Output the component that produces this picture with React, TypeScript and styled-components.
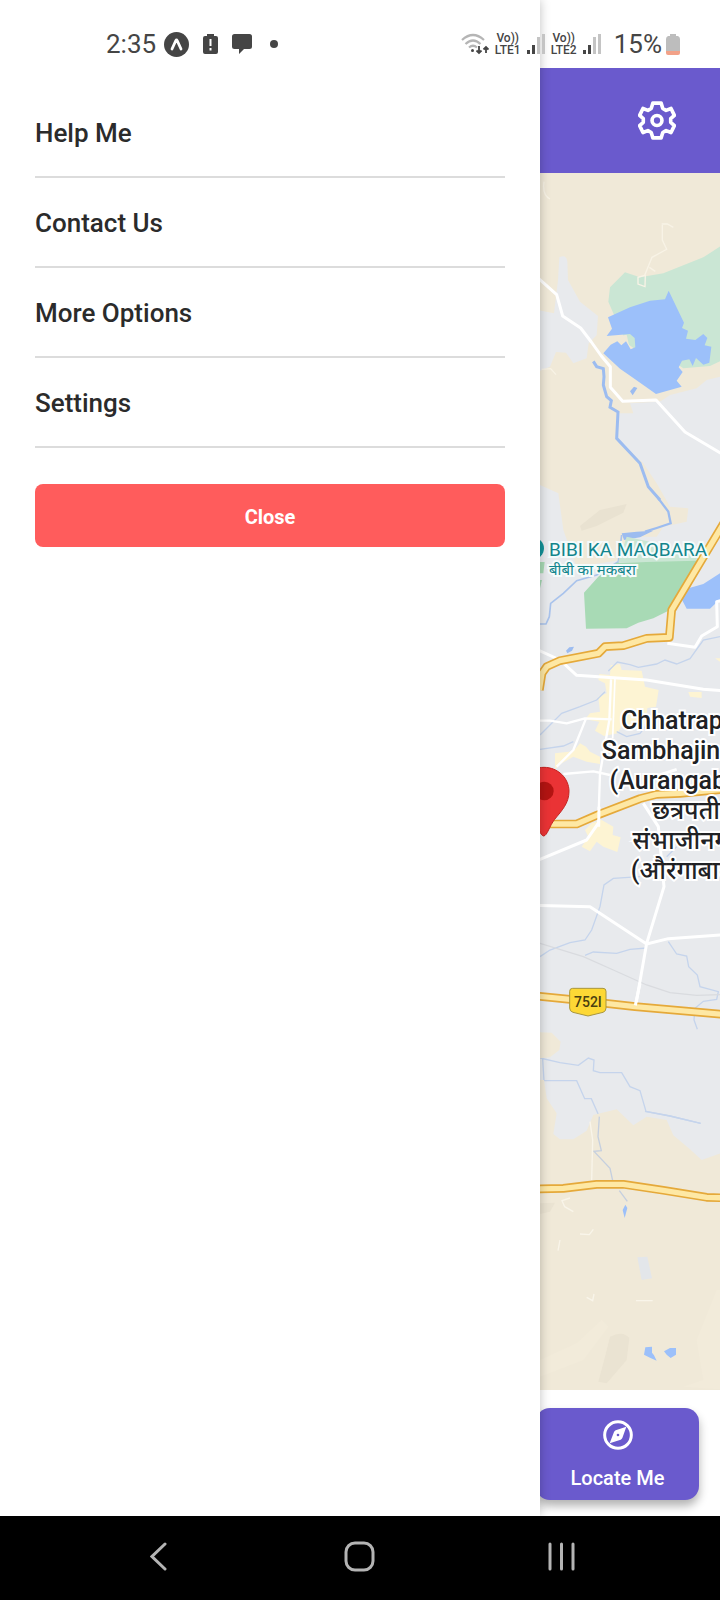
import React from 'react';
import styled, { createGlobalStyle } from 'styled-components';

const GlobalStyle = createGlobalStyle`
  *, *::before, *::after { box-sizing: border-box; }
  body { margin: 0; background: #fff; font-family: Roboto, 'Noto Sans', sans-serif; }
  button { font: inherit; border: 0; padding: 0; background: none; cursor: pointer; }
  svg { display: block; }
`;

const Screen = styled.div`
  display: flex;
  flex-direction: column;
  min-height: 100vh;
  overflow: hidden;
`;

const Stage = styled.div`
  flex: 1;
  display: grid;
  grid-template-columns: 3fr 1fr;
  grid-template-rows: 68px 1fr;
`;

const StatusBar = styled.header`
  grid-area: 1 / 1 / 2 / 3;
  z-index: 3;
  display: flex;
  align-items: center;
  justify-content: space-between;
  padding: 20px 40px 0 106px;
  color: #454545;
`;

const StatusGroup = styled.div<{ $gap: number }>`
  display: flex;
  align-items: center;
  gap: ${(p) => p.$gap}px;
`;

const Clock = styled.time`
  margin-right: -6px;
  font-size: 26px;
  line-height: 30px;
`;

const BatteryLevel = styled.div`
  display: flex;
  align-items: center;
  gap: 4px;
  margin-left: 7px;
  font-size: 26px;
  line-height: 30px;
`;

const Network = styled.span`
  display: flex;
  flex-direction: column;
  align-items: center;
  width: 26px;
  font-size: 12px;
  font-weight: 500;
  line-height: 12px;
  white-space: nowrap;
`;

const Drawer = styled.nav`
  grid-area: 1 / 1 / 3 / 2;
  z-index: 2;
  display: flex;
  flex-direction: column;
  padding: 88px 35px 36px;
  background: #fff;
  box-shadow: 0 0 10px rgba(0, 0, 0, 0.25);
`;

const MenuItem = styled.button`
  height: 90px;
  padding-top: 2px;
  border-bottom: 2px solid #dcdcdc;
  color: #2b2b2b;
  font-size: 26px;
  font-weight: 500;
  text-align: left;
`;

const CloseButton = styled.button`
  height: 63px;
  margin-top: 36px;
  padding-top: 2px;
  border-radius: 8px;
  background: #ff5c5c;
  color: #fff;
  font-size: 20px;
  font-weight: 700;
`;

const AppPane = styled.main`
  grid-area: 2 / 2 / 3 / 3;
  z-index: 1;
  display: flex;
  flex-direction: column;
  min-width: 0;
`;

const AppBar = styled.div`
  display: flex;
  align-items: center;
  justify-content: flex-end;
  height: 105px;
  padding-right: 44px;
  background: #6a5acd;
  color: #fff;
`;

const IconButton = styled.button`
  color: inherit;
`;

const MapView = styled.section`
  position: relative;
  flex: 1;
  overflow: hidden;
  background: #e8eaed;
`;

const MapArt = styled.svg`
  position: absolute;
  inset: 0;
  width: 100%;
  height: 100%;
`;

const MapLabel = styled.div<{ $x: number; $y: number; $size: number; $line: number; $color: string; $halo: string }>`
  position: absolute;
  left: ${(p) => p.$x}px;
  top: ${(p) => p.$y}px;
  color: ${(p) => p.$color};
  font-size: ${(p) => p.$size}px;
  line-height: ${(p) => p.$line}px;
  text-align: center;
  white-space: nowrap;
  -webkit-text-stroke: 4px ${(p) => p.$halo};
  paint-order: stroke fill;
`;

const CityLabel = styled(MapLabel)`
  width: 200px;
  font-weight: 500;
`;

const RouteLabel = styled(MapLabel)`
  font-weight: 500;
  -webkit-text-stroke: 0;
`;

const CityLine = styled.div`
  height: 30px;
`;

const BottomBar = styled.footer`
  display: flex;
  padding: 18px 21px 16px 0;
  background: #fff;
`;

const LocateButton = styled.button`
  flex: 1;
  display: flex;
  flex-direction: column;
  align-items: center;
  gap: 15px;
  height: 92px;
  margin-left: -4px;
  padding-top: 12px;
  border-radius: 14px;
  background: #6a5acd;
  box-shadow: 0 6px 10px rgba(0, 0, 0, 0.3);
  color: #fff;
  font-size: 20px;
  font-weight: 500;
  line-height: 26px;
`;

const SystemNav = styled.nav`
  z-index: 4;
  display: grid;
  grid-template-columns: repeat(3, 1fr);
  height: 84px;
  padding: 0 58px 4px;
  background: #000;
`;

const NavButton = styled.button`
  display: flex;
  align-items: center;
  justify-content: center;
`;

function SignalBars() {
  const bars = [[0, 16, 4], [5, 11, 9], [10, 3, 17], [15, 0, 20]];
  return (
    <svg width="18" height="20" viewBox="0 0 18 20" aria-hidden="true">
      {bars.map(([x, y, h], i) => (
        <rect key={x} x={x} y={y} width="3" height={h} fill={i < 2 ? '#454545' : '#c4c4c4'} />
      ))}
    </svg>
  );
}

function GearIcon() {
  return (
    <svg width="38" height="39" viewBox="38 33 115 117" fill="none" stroke="currentColor" strokeWidth="11" strokeLinejoin="round">
      <path d="M83 39H108L113 55 123 61 138 55 148 76 137 86V97L148 107 138 128 123 122 113 128 108 144H83L78 128 68 122 53 128 43 107 54 97V86L43 76 53 55 68 61 78 55Z" />
      <circle cx="95.500" cy="91.500" r="15" />
    </svg>
  );
}

function CompassIcon() {
  return (
    <svg width="30" height="30" viewBox="24 30 90 90" fill="none" aria-hidden="true">
      <circle cx="69" cy="75" r="40" stroke="currentColor" strokeWidth="9" />
      <path fill="currentColor" fillRule="evenodd" d="M94 50 82 84Q80 87 77 89L44 100 57 66Q59 63 62 61ZM69 71A4 4 0 1 0 69 79 4 4 0 1 0 69 71Z" />
    </svg>
  );
}

function MapDrawing() {
  return (
    <MapArt viewBox="30 339 540 3651" preserveAspectRatio="xMidYMid slice" aria-hidden="true">
      <rect x="0" y="300" width="620" height="3750" fill="#e8eaed" />

      {/* northern hills and lake */}
      <path fill="#f0e9d8" d="M0 300H600V960L480 1010 380 1025 300 1030 310 1060 265 1060V1140L340 1210 380 1270 420 1340 475 1345 470 1385 400 1400 380 1430H290L275 1500 140 1520 100 1410 85 1300 30 1275H0Z" />
      <path fill="#e8eaed" d="M88 592Q108 582 112 604L114 660 150 725 204 768 200 826 176 850 170 895 130 910 108 878 78 876 60 920 0 945V745L72 760 84 660ZM570 950 530 960 500 985 420 1005 390 1025 480 1120 600 1180V930Z" />
      <path fill="#cae6d4" d="M600 540 520 592 400 640 330 652 285 637 240 682 235 725 250 760 290 850 316 868 330 840 460 925 540 918 600 890Z" />
      <path fill="#f0e9d8" d="M246 850 250 832 290 824 300 868 270 890 240 885Z" />
      <path fill="#9cc0fa" d="M234 772 300 742 360 722 405 718 416 692 462 788 456 804 474 812 468 836 496 840 520 822 532 834 524 856 544 860 538 908 520 914 498 894 488 918 478 898 456 902 446 922 458 936 440 962 455 980 378 1002 310 954 270 926 220 880 242 854 262 844 274 856 288 844 302 868 316 862 314 834 300 822 230 828 246 806Z" />
      <g fill="none" stroke="#f8f3e6" strokeWidth="4">
        <path d="M395 492H412L430 502M397 495V540L410 568 366 592 344 646 324 652V672L345 680 346 645M358 622 376 634M42 365Q36 405 60 417M35 928 62 926 78 944" />
      </g>
      <path fill="#e9e2d1" d="M150 1398 210 1350 290 1332 280 1358 200 1398 155 1412Z" />

      {/* river running south from the lake */}
      <path fill="none" stroke="#9cbcf0" strokeWidth="9" d="M190 904 200 920 220 926 222 950 220 975 230 1010 244 1022 240 1042 264 1056 260 1135 330 1210 355 1280 390 1320" />
      <path fill="none" stroke="#9cbcf0" strokeWidth="7" d="M385 1315 415 1355 422 1390 380 1404 345 1415" />
      <path fill="#9cbcf0" d="M275 1420 320 1415 370 1412 330 1432 282 1440ZM300 994 312 980 322 984 308 1006Z" />
      <path fill="none" stroke="#a9c3ec" strokeWidth="5" d="M275 1425 265 1505 200 1545 140 1562 100 1600 62 1630 58 1670 48 1692 30 1692" />
      <path fill="#9cbcf0" d="M108 1772 118 1762 132 1760 126 1772 112 1780Z" />

      {/* gardens and the eastern reservoir */}
      <path fill="#cae6d4" d="M290 1430 360 1445 380 1470 500 1480V1506H265Z" />
      <path fill="#a8dab5" d="M260 1508 500 1502 420 1650 370 1675 325 1688 290 1705 168 1706 162 1598 205 1550ZM30 1506H44L40 1540H30ZM30 1560H36L30 1585Z" />
      <path fill="#9cc0fa" d="M600 1520V1625L565 1622 540 1646H470L455 1618 470 1586 520 1572Z" />

      {/* built-up blocks */}
      <g fill="#fdf4d3">
        <path d="M242 1816 270 1812 275 1830 335 1832 345 1880 386 1890 378 1940 352 1944 348 1990 290 2010 280 1990 262 2020 222 2028 195 2012 208 1985 165 1978 180 1960 210 1955 205 1910 230 1900 225 1870 205 1860 208 1842 240 1845Z" />
        <path d="M75 2080 130 2074 150 2050 168 2060 180 2075 210 2090V2112L170 2105 130 2090 95 2110 75 2128ZM185 2290 215 2280 250 2300 248 2325 272 2332 262 2376 220 2360 200 2345 180 2374 155 2360 175 2330 165 2310ZM475 1896H515V1914L480 1910ZM555 1795H600V1825Z" />
      </g>

      {/* streams */}
      <g fill="none" stroke="#c5d4ec" strokeWidth="4">
        <path d="M235 1833 262 1806 300 1814 325 1822 380 1812 405 1800 440 1812 480 1796 520 1740 570 1730M225 1895 200 1920 150 1940 95 1960 30 2025M30 2068 100 2058 130 2045M260 2015 290 2030 330 2020 350 1995M330 2450 250 2455 222 2475 210 2540 185 2610 165 2640 120 2648 60 2670 30 2690M165 2686 190 2676 260 2680 300 2668 350 2664M415 2645 440 2682 470 2688 476 2720 502 2745 510 2780 565 2795 560 2818 520 2824 495 2845 492 2880 502 2908M410 2390 440 2360" />
        <path d="M30 2994 90 3008 145 3016 175 2994 192 3000 190 3032 210 3038 275 3038 300 3080 330 3092 348 3154 420 3168 512 3190M38 2998 42 3062H140L164 3116 184 3116 208 3170" />
      </g>
      <path fill="none" stroke="#d9dbdf" strokeWidth="4" d="M30 2650 160 2690 250 2730 350 2775 420 2798 500 2806 570 2804" />

      {/* southern plain */}
      <g fill="#f0e9d8">
        <path d="M0 2915 65 2918 92 2945 88 2970 60 2992 30 2995H0Z" />
        <path d="M0 3060H42L50 3115 80 3160 70 3222 90 3238H130L170 3212 190 3165 260 3148 310 3196 350 3170 410 3180 430 3226 480 3268 515 3300 600 3270V4050H0Z" />
      </g>
      <path fill="none" stroke="#c5cfdf" strokeWidth="4" d="M208 3170 204 3230 214 3272 192 3274 240 3325 248 3362M268 3392 292 3424" />
      <path fill="none" stroke="#c5d4ec" strokeWidth="4" d="M345 3154 420 3168 512 3190" />
      <path fill="#eae3d2" d="M240 3830Q280 3810 298 3835L290 3900 230 3970 205 3965 225 3890ZM30 3430 75 3428 60 3455 30 3462Z" />
      <path fill="#f2ebda" d="M30 3900 140 3850 215 3780 235 3800 160 3900 30 3950ZM500 3840 560 3690H600V3990L460 3980 520 3960Z" />
      <path fill="#e3e6ea" d="M322 3592 352 3590 366 3655 335 3660Z" />
      <path fill="#9cc0fa" d="M278 3450 286 3434 292 3444 284 3474ZM346 3862 366 3860V3878L372 3886 380 3902 360 3893 342 3884ZM402 3874 420 3864 438 3864V3884L422 3894 410 3884Z" />
      <path fill="none" stroke="#f9f5ea" strokeWidth="4" d="M180 3185 188 3240 185 3360M120 3414 96 3422 104 3440 130 3455M150 3522 178 3524 190 3508M90 3540 84 3572M170 3712 188 3722 192 3702M318 3722H368" />

      {/* minor roads */}
      <g fill="none" stroke="#fff" strokeWidth="9" strokeLinejoin="round">
        <path d="M20 650 80 704 98 768 152 804 184 846 214 888 241 920V982L278 1024 378 1020 465 1116 580 1184" />
        <path d="M412 1750 495 1762 515 1728 562 1700 560 1625 580 1620M20 1768 90 1800 140 1846 350 1860 520 1888 600 1894" />
        <path strokeWidth="5" d="M255 1855 248 2035" />
        <path strokeWidth="7" d="M20 1982H60L110 1990 165 1975 245 1978M167 1978 130 2070 80 2120M243 1858 238 1980 210 2140 205 2290M100 2142 190 2134 240 2145" />
        <path d="M206 2288 170 2340 20 2402M340 2230 385 2300 402 2480 350 2650 318 2832M20 2536 180 2540 350 2652 415 2636 580 2624M380 2148 440 2128" />
      </g>

      {/* highways */}
      {[
        'M590 1375 425 1650 418 1732 350 1735 280 1757 225 1760 205 1780 90 1802 50 1820 36 1840 28 1890',
        'M20 2292 140 2292 200 2266 330 2216 380 2203 450 2200 600 2186',
        'M20 2808 120 2818 315 2840 600 2865',
        'M20 3387 100 3385 200 3373 280 3373 400 3391 530 3412 600 3414',
      ].map((d) => (
        <g key={d} fill="none" strokeLinejoin="round">
          <path d={d} stroke="#e5a93a" strokeWidth="26" />
          <path d={d} stroke="#fee8a4" strokeWidth="16" />
        </g>
      ))}
      <path fill="none" stroke="#fff" strokeWidth="9" d="M207 2240 206 2300M330 2770 316 2836" />

      {/* route shield */}
      <path fill="#fdd835" stroke="#a8963e" strokeWidth="3" d="M128 2785H219Q228 2785 228 2794V2844Q228 2854 219 2857L174 2868 129 2857Q119 2854 119 2844V2794Q119 2785 128 2785Z" />

      {/* monument marker and the current position pin */}
      <circle cx="10" cy="1465" r="32" fill="#12939a" />
      <path fill="#ea3335" stroke="#c5221f" strokeWidth="3" d="M42 2122C84 2122 117 2155 117 2194 117 2230 95 2252 74 2278 58 2298 52 2327 41 2328 30 2327 26 2298 10 2278-12 2252-33 2230-33 2194-33 2155 0 2122 42 2122Z" />
      <circle cx="43" cy="2193" r="28" fill="#b31412" />
    </MapArt>
  );
}

const menu = ['Help Me', 'Contact Us', 'More Options', 'Settings'];
const cityLines = ['Chhatrapati', 'Sambhajinagar', '(Aurangabad)', 'छत्रपती', 'संभाजीनगर', '(औरंगाबाद)'];

export default function App() {
  return (
    <Screen>
      <GlobalStyle />
      <Stage>
        <StatusBar>
          <StatusGroup $gap={14}>
            <Clock>2:35</Clock>
            <svg width="25" height="25" viewBox="0 0 25 25" aria-hidden="true">
              <circle cx="12.500" cy="12.500" r="12.500" fill="#454545" />
              <path d="M8 17 11.800 8.600Q12.500 7.400 13.200 8.600L17 17" fill="none" stroke="#fff" strokeWidth="2.800" strokeLinecap="round" />
            </svg>
            <svg width="15" height="20" viewBox="0 0 15 20" aria-hidden="true">
              <path fill="#454545" d="M4 0H11V2H13Q15 2 15 4V18Q15 20 13 20H2Q0 20 0 18V4Q0 2 2 2H4Z" />
              <path stroke="#fff" strokeWidth="2" d="M7.500 5V12M7.500 14V16.500" />
            </svg>
            <svg width="20" height="20" viewBox="0 0 20 20" aria-hidden="true">
              <path fill="#454545" d="M2.500 0H17.500Q20 0 20 2.500V12.500Q20 15 17.500 15H12L7 20V15H2.500Q0 15 0 12.500V2.500Q0 0 2.500 0Z" />
            </svg>
            <svg width="16" height="8" viewBox="0 0 16 8" aria-hidden="true">
              <circle cx="8" cy="4" r="4" fill="#454545" />
            </svg>
          </StatusGroup>
          <StatusGroup $gap={6}>
            <svg width="28" height="22" viewBox="0 0 28 22" fill="none" aria-hidden="true">
              <g stroke="#b5b5b5" strokeWidth="2.200">
                <path d="M1 7Q12 -3 23 7M4.500 11Q12 4 19.500 11M8 14.500Q12 11 16 14.500" />
              </g>
              <circle cx="11.500" cy="17.500" r="1.500" fill="#454545" />
              <path stroke="#454545" strokeWidth="1.800" d="M18 13V20M15.500 17.500 18 20 20.500 17.500M25 20V14M22.500 16.500 25 14 27.500 16.500" />
            </svg>
            <Network><span>Vo))</span><span>LTE1</span></Network>
            <SignalBars />
            <Network><span>Vo))</span><span>LTE2</span></Network>
            <SignalBars />
            <BatteryLevel>
              <span>15%</span>
              <svg width="14" height="21" viewBox="0 0 14 21" aria-hidden="true">
                <path fill="#bdbdbd" d="M4 0H10V2H12Q14 3 14 5V17H0V5Q0 3 2 2H4Z" />
                <path fill="#f2a188" d="M0 17H14V19Q14 21 12 21H2Q0 21 0 19Z" />
              </svg>
            </BatteryLevel>
          </StatusGroup>
        </StatusBar>

        <Drawer aria-label="Main menu">
          {menu.map((item) => (
            <MenuItem key={item} type="button">{item}</MenuItem>
          ))}
          <CloseButton type="button">Close</CloseButton>
        </Drawer>

        <AppPane>
          <AppBar>
            <IconButton type="button" aria-label="Settings">
              <GearIcon />
            </IconButton>
          </AppBar>
          <MapView aria-label="Map">
            <MapDrawing />
            <MapLabel $x={9} $y={365} $size={19} $line={24} $color="#12858c" $halo="#f4fbfb">BIBI KA MAQBARA</MapLabel>
            <MapLabel $x={9} $y={388} $size={15} $line={18} $color="#12858c" $halo="#f4fbfb">बीबी का मकबरा</MapLabel>
            <CityLabel $x={46} $y={533} $size={25} $line={30} $color="#202124" $halo="#fff">
              {cityLines.map((line) => (
                <CityLine key={line}>{line}</CityLine>
              ))}
            </CityLabel>
            <RouteLabel $x={34} $y={820} $size={14} $line={18} $color="#4a4010" $halo="transparent">752I</RouteLabel>
          </MapView>
          <BottomBar>
            <LocateButton type="button">
              <CompassIcon />
              Locate Me
            </LocateButton>
          </BottomBar>
        </AppPane>
      </Stage>

      <SystemNav aria-label="System navigation">
        <NavButton type="button" aria-label="Back">
          <svg width="17" height="29" viewBox="0 0 17 29" fill="none" stroke="#b4b4b4" strokeWidth="3" strokeLinecap="round">
            <path d="M15 2 2 14.500 15 27" />
          </svg>
        </NavButton>
        <NavButton type="button" aria-label="Home">
          <svg width="31" height="31" viewBox="0 0 31 31" fill="none" stroke="#b4b4b4" strokeWidth="3">
            <rect x="2" y="2" width="27" height="27" rx="9" />
          </svg>
        </NavButton>
        <NavButton type="button" aria-label="Recent apps">
          <svg width="27" height="29" viewBox="0 0 27 29" stroke="#b4b4b4" strokeWidth="3" strokeLinecap="round">
            <path d="M2 2V27M13.500 2V27M25 2V27" />
          </svg>
        </NavButton>
      </SystemNav>
    </Screen>
  );
}
